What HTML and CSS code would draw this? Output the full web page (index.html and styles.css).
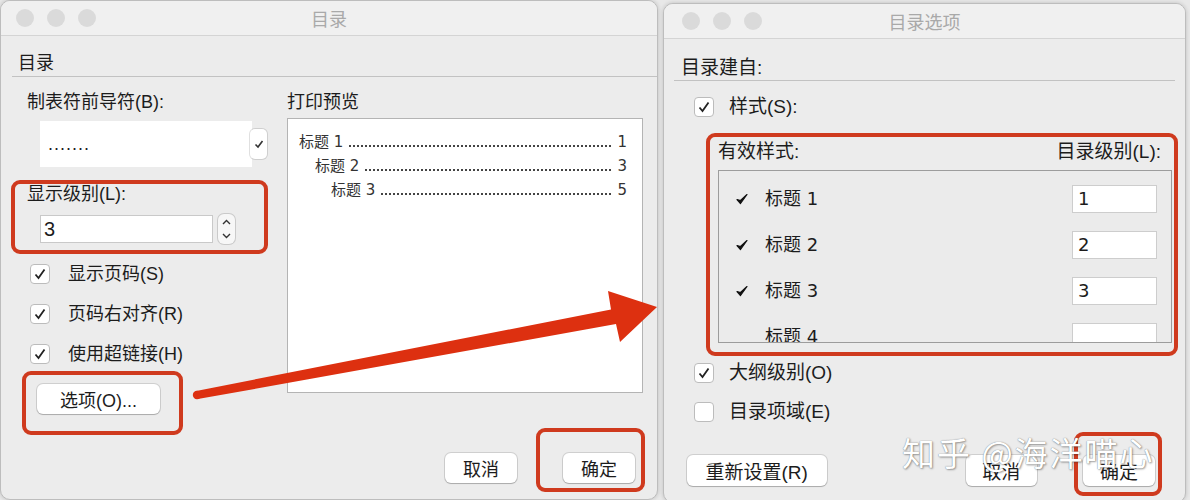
FILE: index.html
```html
<!DOCTYPE html>
<html>
<head>
	<title>目录</title>
	<meta charset="UTF-8">
	<link rel="stylesheet" href="styles.css">
</head>
<body>
<div class="stage">

	<!-- left dialog: 目录 -->
	<div class="window win-left">
		<div class="titlebar">
			<div class="lights"><i></i><i></i><i></i></div>
			<div class="title">目录</div>
			<div></div>
		</div>
		<div class="win-body">
			<div class="section-head">目录</div>
			<div class="columns">
				<div class="col-left">
					<div class="label">制表符前导符(B):</div>
					<div class="leader-pick">
						<div class="leader-val">.......</div>
						<div class="pop-btn">
							<svg width="10" height="10" viewBox="0 0 10 10"><path d="M1.5 5.5 L4 8 L8.5 2" fill="none" stroke="#333" stroke-width="1.6"/></svg>
						</div>
					</div>
					<div class="label gap-top">显示级别(L):</div>
					<div class="num-row">
						<div class="num-input">3</div>
						<div class="stepper">
							<svg width="11" height="26" viewBox="0 0 11 26"><path d="M2 8 L5.5 4.5 L9 8" fill="none" stroke="#333" stroke-width="1.4"/><path d="M2 18 L5.5 21.5 L9 18" fill="none" stroke="#333" stroke-width="1.4"/></svg>
						</div>
					</div>
					<div class="check-list">
						<div class="check-row">
							<span class="cb on"><svg width="18" height="18" viewBox="0 0 18 18"><path d="M4.5 9.5 L7.5 13 L13.5 4.5" fill="none" stroke="#222" stroke-width="1.8"/></svg></span>
							<span>显示页码(S)</span>
						</div>
						<div class="check-row">
							<span class="cb on"><svg width="18" height="18" viewBox="0 0 18 18"><path d="M4.5 9.5 L7.5 13 L13.5 4.5" fill="none" stroke="#222" stroke-width="1.8"/></svg></span>
							<span>页码右对齐(R)</span>
						</div>
						<div class="check-row">
							<span class="cb on"><svg width="18" height="18" viewBox="0 0 18 18"><path d="M4.5 9.5 L7.5 13 L13.5 4.5" fill="none" stroke="#222" stroke-width="1.8"/></svg></span>
							<span>使用超链接(H)</span>
						</div>
					</div>
					<button class="btn btn-options">选项(O)...</button>
				</div>
				<div class="col-right">
					<div class="label">打印预览</div>
					<div class="preview">
						<div class="toc-line lvl1"><span>标题 1</span><span class="dots"></span><span>1</span></div>
						<div class="toc-line lvl2"><span>标题 2</span><span class="dots"></span><span>3</span></div>
						<div class="toc-line lvl3"><span>标题 3</span><span class="dots"></span><span>5</span></div>
					</div>
				</div>
			</div>
			<div class="footer footer-left">
				<button class="btn btn-small">取消</button>
				<button class="btn btn-small">确定</button>
			</div>
		</div>
	</div>

	<!-- right dialog: 目录选项 -->
	<div class="window win-right">
		<div class="titlebar">
			<div class="lights"><i></i><i></i><i></i></div>
			<div class="title">目录选项</div>
			<div></div>
		</div>
		<div class="win-body">
			<div class="section-head">目录建自:</div>
			<div class="check-row opt-row first">
				<span class="cb on"><svg width="18" height="18" viewBox="0 0 18 18"><path d="M4.5 9.5 L7.5 13 L13.5 4.5" fill="none" stroke="#222" stroke-width="1.8"/></svg></span>
				<span>样式(S):</span>
			</div>
			<div class="styles-group">
				<div class="group-head">
					<span>有效样式:</span>
					<span>目录级别(L):</span>
				</div>
				<div class="style-list">
					<div class="style-row">
						<span class="tick"><svg width="12" height="12" viewBox="0 0 12 12"><path d="M1 6.5 L4.5 10.5 L11 1.5 L4.5 7.5 Z" fill="#111" stroke="#111" stroke-width="1.2" stroke-linejoin="round"/></svg></span>
						<span class="style-name">标题 1</span>
						<span class="level-input">1</span>
					</div>
					<div class="style-row">
						<span class="tick"><svg width="12" height="12" viewBox="0 0 12 12"><path d="M1 6.5 L4.5 10.5 L11 1.5 L4.5 7.5 Z" fill="#111" stroke="#111" stroke-width="1.2" stroke-linejoin="round"/></svg></span>
						<span class="style-name">标题 2</span>
						<span class="level-input">2</span>
					</div>
					<div class="style-row">
						<span class="tick"><svg width="12" height="12" viewBox="0 0 12 12"><path d="M1 6.5 L4.5 10.5 L11 1.5 L4.5 7.5 Z" fill="#111" stroke="#111" stroke-width="1.2" stroke-linejoin="round"/></svg></span>
						<span class="style-name">标题 3</span>
						<span class="level-input">3</span>
					</div>
					<div class="style-row">
						<span class="tick"></span>
						<span class="style-name">标题 4</span>
						<span class="level-input"></span>
					</div>
				</div>
			</div>
			<div class="check-row opt-row">
				<span class="cb on"><svg width="18" height="18" viewBox="0 0 18 18"><path d="M4.5 9.5 L7.5 13 L13.5 4.5" fill="none" stroke="#222" stroke-width="1.8"/></svg></span>
				<span>大纲级别(O)</span>
			</div>
			<div class="check-row opt-row">
				<span class="cb"></span>
				<span>目录项域(E)</span>
			</div>
			<div class="footer footer-right">
				<button class="btn btn-reset">重新设置(R)</button>
				<button class="btn btn-small">取消</button>
				<button class="btn btn-small">确定</button>
			</div>
		</div>
	</div>

	<!-- annotations on top -->
	<div class="mark mark-level"></div>
	<div class="mark mark-options"></div>
	<div class="mark mark-ok-left"></div>
	<div class="mark mark-styles"></div>
	<div class="mark mark-ok-right"></div>

	<svg class="arrow" width="1190" height="500" viewBox="0 0 1190 500">
		<circle cx="197" cy="395" r="4.2" fill="#dd3010"/>
		<polygon points="196.2,390.9 611,309.5 608,291 657,307 620,342 616,324 197.8,399.1" fill="#dd3010"/>
	</svg>

	<div class="watermark">知乎 @海洋喵心</div>
</div>
</body>
</html>
```

FILE: styles.css
```css
	body {
		margin: 0;
		background-color: #e4e4e4;
		font-family: "Liberation Sans", "Noto Sans CJK SC", sans-serif;
		color: #1c1c1c;
	}

	.stage {
		position: relative;
		width: 1190px;
		height: 500px;
		overflow: hidden;
		display: flex;
		align-items: flex-start;
		gap: 5px;
		background-color: #e8e8e8;
	}

	.window {
		background-color: #ececec;
		border: 1px solid #bdbdbd;
		border-radius: 10px;
		box-shadow: 0px 0px 4px rgba(0, 0, 0, 0.18);
		box-sizing: border-box;
		overflow: hidden;
	}

	.win-left {
		width: 658px;
		height: 500px;
	}

	.win-right {
		width: 523px;
		height: 500px;
		margin-top: 3px;
	}

	.titlebar {
		height: 35px;
		display: grid;
		grid-template-columns: 1fr auto 1fr;
		align-items: center;
		background-color: #f0f0f0;
		border-bottom: 1px solid #d4d4d4;
		box-sizing: border-box;
	}

	.lights {
		display: flex;
		gap: 13px;
		padding-left: 15px;
	}

	.win-right .lights {
		padding-left: 18px;
	}

	.lights i {
		width: 18px;
		height: 18px;
		border-radius: 50%;
		background-color: #dadada;
	}

	.title {
		font-size: 18px;
		color: #a9a9a9;
		font-family: "Noto Sans CJK SC", sans-serif;
	}

	.win-body {
		font-size: 18px;
		line-height: 24px;
	}

	.win-left .win-body {
		padding-left: 11px;
	}

	.win-right .win-body {
		padding: 0 10px 0 10px;
		font-size: 19px;
	}

	.section-head {
		padding: 15px 0 1px 6px;
		border-bottom: 1px solid #c2c2c2;
	}

	.win-right .section-head {
		padding: 17px 0 0 7px;
	}

	/* left dialog columns */
	.columns {
		display: flex;
		padding-left: 15px;
		margin-top: 13px;
	}

	.col-left {
		width: 260px;
		display: flex;
		flex-direction: column;
		align-items: flex-start;
	}

	.col-right {
		width: 356px;
	}

	.gap-top {
		margin-top: 15px;
	}

	.leader-pick {
		margin: 7px 0 0 13px;
		display: flex;
		align-items: center;
	}

	.leader-val {
		width: 212px;
		height: 46px;
		background-color: #ffffff;
		box-sizing: border-box;
		padding: 11px 0 0 8px;
		font-size: 18px;
		letter-spacing: 1px;
	}

	.pop-btn {
		width: 17px;
		height: 30px;
		margin-left: -2px;
		background-color: #ffffff;
		border-radius: 5px;
		box-shadow: 0px 0px 0px 1px rgba(0, 0, 0, 0.12);
		display: flex;
		align-items: center;
		justify-content: center;
	}

	.num-row {
		margin: 8px 0 0 13px;
		display: flex;
		align-items: center;
		gap: 5px;
	}

	.num-input {
		width: 173px;
		height: 28px;
		box-sizing: border-box;
		background-color: #ffffff;
		border: 1px solid #c9c9c9;
		padding-left: 3px;
		font-size: 20px;
		line-height: 26px;
	}

	.stepper {
		width: 17px;
		height: 30px;
		border-radius: 6px;
		background-color: #f7f7f7;
		box-shadow: 0px 0px 0px 1px rgba(0, 0, 0, 0.14);
		display: flex;
		align-items: center;
		justify-content: center;
	}

	.check-list {
		margin-top: 10px;
	}

	.check-row {
		display: flex;
		align-items: center;
		height: 40px;
		padding-left: 3px;
	}

	.cb {
		width: 20px;
		height: 20px;
		box-sizing: border-box;
		background-color: #ffffff;
		border: 1px solid #bcbcbc;
		border-radius: 4px;
		margin-right: 18px;
		display: flex;
		align-items: center;
		justify-content: center;
	}

	.btn {
		background-color: #ffffff;
		border: none;
		border-radius: 6px;
		box-shadow: 0px 0px 0px 1px rgba(0, 0, 0, 0.12), 0px 1px 1px rgba(0, 0, 0, 0.18);
		font-family: "Liberation Sans", "Noto Sans CJK SC", sans-serif;
		font-size: 18px;
		color: #1c1c1c;
		padding: 0;
		height: 30px;
	}

	.btn-options {
		width: 123px;
		margin: 10px 0 0 10px;
	}

	.btn-small {
		width: 72px;
	}

	.btn-reset {
		width: 140px;
		height: 31px;
		font-size: 19px;
	}

	/* print preview */
	.preview {
		margin-top: 4px;
		height: 275px;
		box-sizing: border-box;
		background-color: #ffffff;
		border: 1px solid #b4b4b4;
		padding: 11px 15px 0 11px;
		font-family: "DejaVu Sans", "Noto Sans CJK SC", sans-serif;
		font-size: 15px;
		line-height: 24px;
		color: #333333;
	}

	.toc-line {
		display: flex;
		white-space: nowrap;
	}

	.toc-line .dots {
		flex: 1;
		height: 4px;
		align-self: flex-end;
		margin: 0 4px 6px 5px;
		background-image: radial-gradient(circle, #444444 0.9px, transparent 1.3px);
		background-size: 4px 4px;
		background-repeat: repeat-x;
	}

	.lvl2 {
		padding-left: 16px;
	}

	.lvl3 {
		padding-left: 32px;
	}

	.footer {
		display: flex;
		justify-content: flex-end;
		gap: 46px;
	}

	.footer-left {
		margin-top: 39px;
		padding-right: 22px;
	}

	/* right dialog */
	.opt-row {
		padding-left: 20px;
		height: 24px;
	}

	.opt-row .cb {
		margin-right: 15px;
	}

	.opt-row.first {
		margin-top: 14px;
	}

	.opt-row + .opt-row {
		margin-top: 15px;
	}

	.styles-group + .opt-row {
		margin-top: 18px;
	}

	.styles-group {
		margin: 21px 0 0 44px;
		width: 454px;
	}

	.group-head {
		display: flex;
		justify-content: space-between;
		padding-right: 11px;
		height: 24px;
	}

	.style-list {
		margin-top: 6px;
		height: 173px;
		box-sizing: border-box;
		border: 1px solid #9c9c9c;
		background-color: #ebebeb;
		padding-top: 5px;
		overflow: hidden;
	}

	.style-row {
		display: flex;
		align-items: center;
		height: 46px;
	}

	.tick {
		width: 12px;
		margin: 0 17px 0 17px;
		display: flex;
	}

	.style-name {
		flex: 1;
		font-family: "DejaVu Sans", "Noto Sans CJK SC", sans-serif;
		font-size: 18px;
	}

	.level-input {
		width: 85px;
		height: 28px;
		box-sizing: border-box;
		background-color: #ffffff;
		border: 1px solid #cdcdcd;
		margin-right: 14px;
		padding-left: 5px;
		font-family: "DejaVu Sans", sans-serif;
		font-size: 18px;
		line-height: 26px;
	}

	.footer-right {
		margin-top: 31px;
		padding: 0 20px 0 13px;
		justify-content: flex-start;
	}

	.footer-right .btn-small {
		height: 31px;
		font-size: 19px;
	}

	.footer-right .btn-reset {
		margin-right: 93px;
	}

	/* red annotation boxes */
	.mark {
		position: absolute;
		border: 4px solid #cf3a1e;
		border-radius: 9px;
		box-sizing: border-box;
	}

	.mark-level {
		left: 11px;
		top: 180px;
		width: 257px;
		height: 74px;
	}

	.mark-options {
		left: 22px;
		top: 371px;
		width: 161px;
		height: 64px;
	}

	.mark-ok-left {
		left: 536px;
		top: 428px;
		width: 109px;
		height: 64px;
	}

	.mark-styles {
		left: 706px;
		top: 133px;
		width: 472px;
		height: 223px;
	}

	.mark-ok-right {
		left: 1074px;
		top: 432px;
		width: 88px;
		height: 64px;
	}

	.arrow {
		position: absolute;
		left: 0;
		top: 0;
	}

	.watermark {
		position: absolute;
		left: 902px;
		top: 432px;
		font-family: "Noto Sans CJK SC", sans-serif;
		font-size: 33px;
		line-height: 40px;
		color: #ffffff;
		text-shadow: 0px 0px 1px #6a6a6a, 1px 1px 2px rgba(0, 0, 0, 0.35);
		letter-spacing: 2px;
	}
```
